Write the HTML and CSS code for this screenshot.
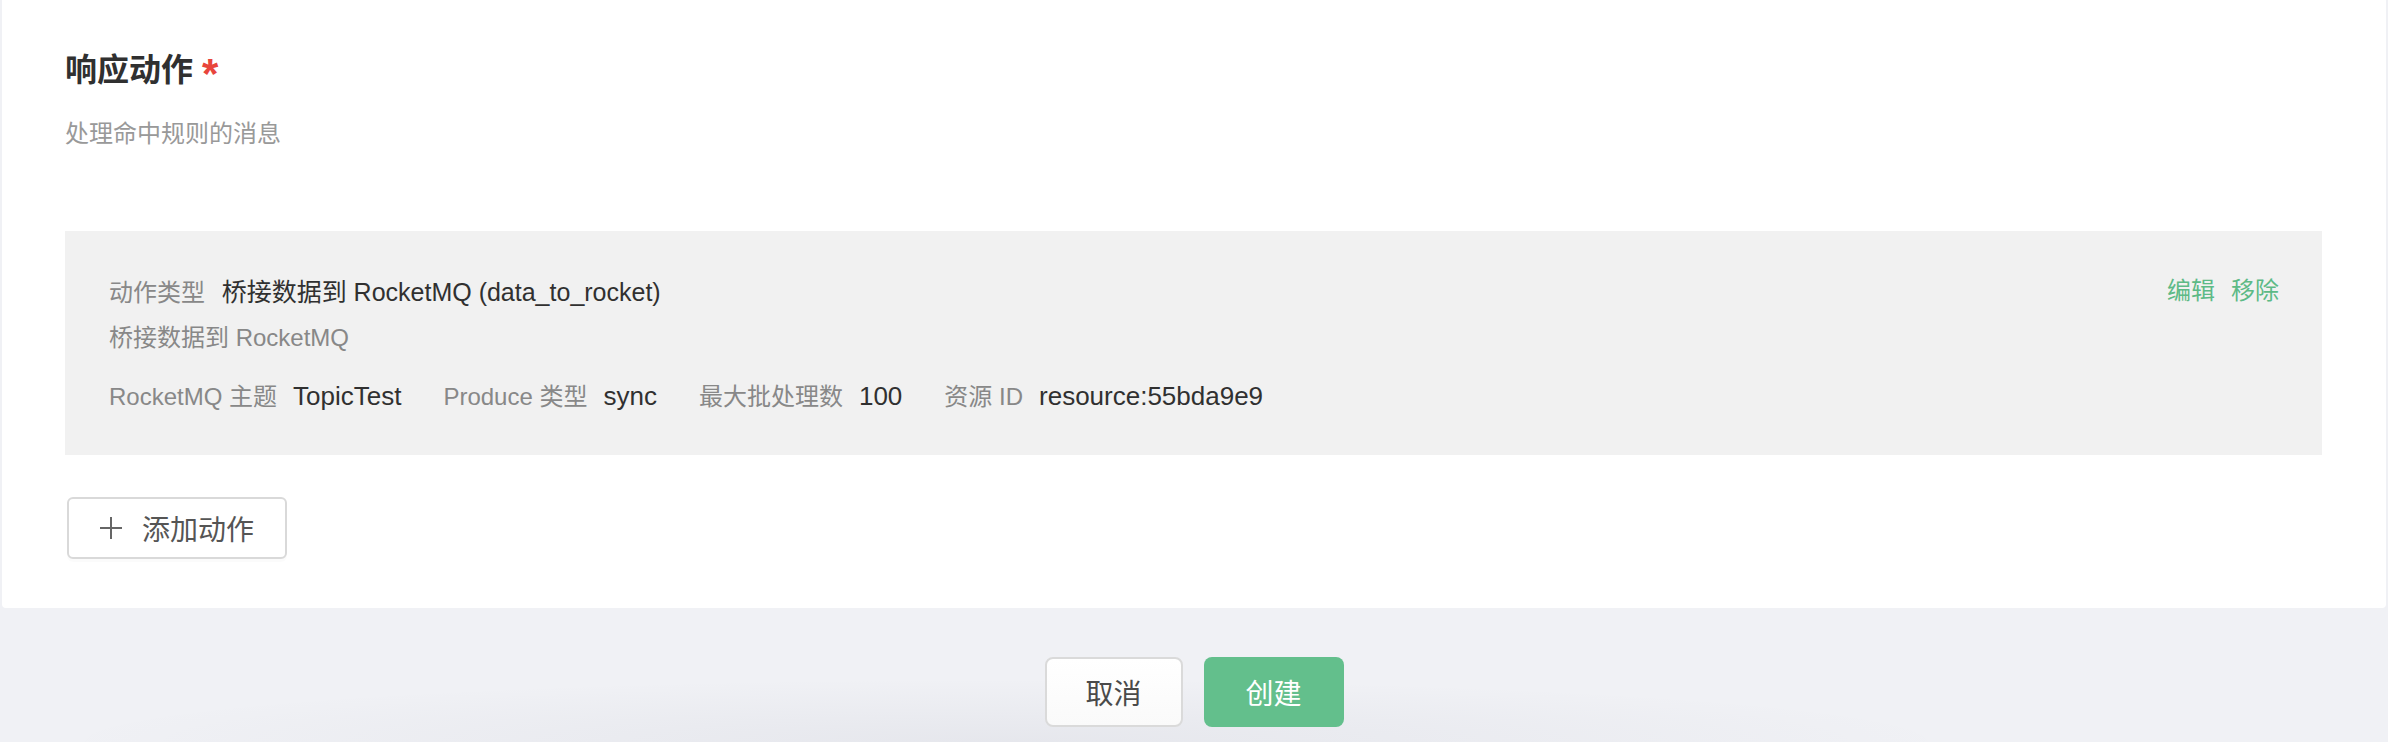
FILE: index.html
```html
<!DOCTYPE html>
<html lang="zh-CN">
<head>
<meta charset="utf-8">
<title>响应动作</title>
<link rel="stylesheet" href="styles.css">
</head>
<body>
<div class="page">
  <section class="card">
    <h2 class="section-title">响应动作<span class="required">*</span></h2>
    <p class="section-desc">处理命中规则的消息</p>

    <div class="action-item">
      <div class="action-body">
        <div class="row row-type">
          <span class="label">动作类型</span>
          <span class="value">桥接数据到 RocketMQ (data_to_rocket)</span>
        </div>
        <div class="row row-desc">桥接数据到 RocketMQ</div>
        <div class="row row-params">
          <span class="param"><span class="label">RocketMQ 主题</span><span class="value">TopicTest</span></span>
          <span class="param"><span class="label">Produce 类型</span><span class="value">sync</span></span>
          <span class="param"><span class="label">最大批处理数</span><span class="value">100</span></span>
          <span class="param"><span class="label">资源 ID</span><span class="value">resource:55bda9e9</span></span>
        </div>
      </div>
      <div class="action-ops">
        <a class="op">编辑</a>
        <a class="op">移除</a>
      </div>
    </div>

    <button class="btn-add" type="button">
      <svg class="plus" width="22" height="22" viewBox="0 0 22 22" aria-hidden="true">
        <path d="M11 0V22M0 11H22" stroke="#666" stroke-width="2" fill="none"/>
      </svg>
      <span>添加动作</span>
    </button>
  </section>

  <footer class="footer">
    <button class="btn btn-cancel" type="button">取消</button>
    <button class="btn btn-primary" type="button">创建</button>
  </footer>
</div>
</body>
</html>
```

FILE: styles.css
```css
* {
  box-sizing: border-box;
}

html, body {
  margin: 0;
  padding: 0;
}

body {
  width: 2388px;
  height: 742px;
  overflow: hidden;
  background: #f0f1f5;
  font-family: "Liberation Sans", "Noto Sans CJK SC", sans-serif;
  color: #333;
}

.page {
  display: flex;
  flex-direction: column;
  height: 742px;
  padding: 0 2px;
}

.card {
  background: #fff;
  border-radius: 0 0 4px 4px;
  padding: 48px 64px 49px 63px;
}

.section-title {
  margin: 0;
  font-size: 32px;
  line-height: 44px;
  font-weight: 700;
  color: #303030;
}

.required {
  display: inline-block;
  margin-left: 9px;
  font-size: 42px;
  line-height: 0;
  color: #e8453c;
  vertical-align: -7px;
  font-weight: 700;
}

.section-desc {
  margin: 24px 0 0;
  font-size: 24px;
  line-height: 36px;
  color: #999;
}

.action-item {
  margin-top: 79px;
  background: #f1f1f1;
  padding: 44px 43px 40px 44px;
  display: flex;
  justify-content: space-between;
  align-items: flex-start;
}

.row {
  height: 36px;
  font-size: 24px;
  line-height: 36px;
  white-space: nowrap;
}

.row-desc {
  margin-top: 9px;
  color: #888;
}

.row-params {
  margin-top: 23px;
  display: flex;
}

.param {
  margin-right: 42px;
}

.label {
  color: #888;
  margin-right: 16px;
}

.value {
  color: #303030;
  font-size: 26px;
  line-height: 1;
}

.row-type .label {
  margin-right: 10px;
}

.row-type .value {
  font-size: 25px;
}

.action-ops {
  display: flex;
  gap: 16px;
  font-size: 24px;
  line-height: 32px;
}

.op {
  color: #5dba86;
  cursor: pointer;
}

.btn-add {
  margin: 42px 0 0 2px;
  height: 62px;
  width: 220px;
  padding: 0 0 0 31px;
  display: flex;
  align-items: center;
  gap: 20px;
  background: #fff;
  border: 2px solid #d9d9d9;
  border-radius: 6px;
  font-family: inherit;
  font-size: 28px;
  color: #555;
  box-shadow: 0 3px 0 rgba(0, 0, 0, 0.015);
}

.plus {
  display: block;
}

.footer {
  flex: 1;
  display: flex;
  justify-content: center;
  align-items: flex-start;
  gap: 21px;
  padding-top: 49px;
  background: radial-gradient(ellipse 960px 64px at 1004px 100%, rgba(40, 45, 80, 0.05), rgba(40, 45, 80, 0) 100%);
}

.btn {
  height: 70px;
  font-family: inherit;
  font-size: 28px;
  border-radius: 8px;
  cursor: pointer;
}

.btn-cancel {
  width: 138px;
  background: linear-gradient(#fff, #fafafa);
  border: 2px solid #dadada;
  color: #4a4a4a;
}

.btn-primary {
  width: 140px;
  background: #63bf8c;
  border: none;
  color: #fff;
}
```
